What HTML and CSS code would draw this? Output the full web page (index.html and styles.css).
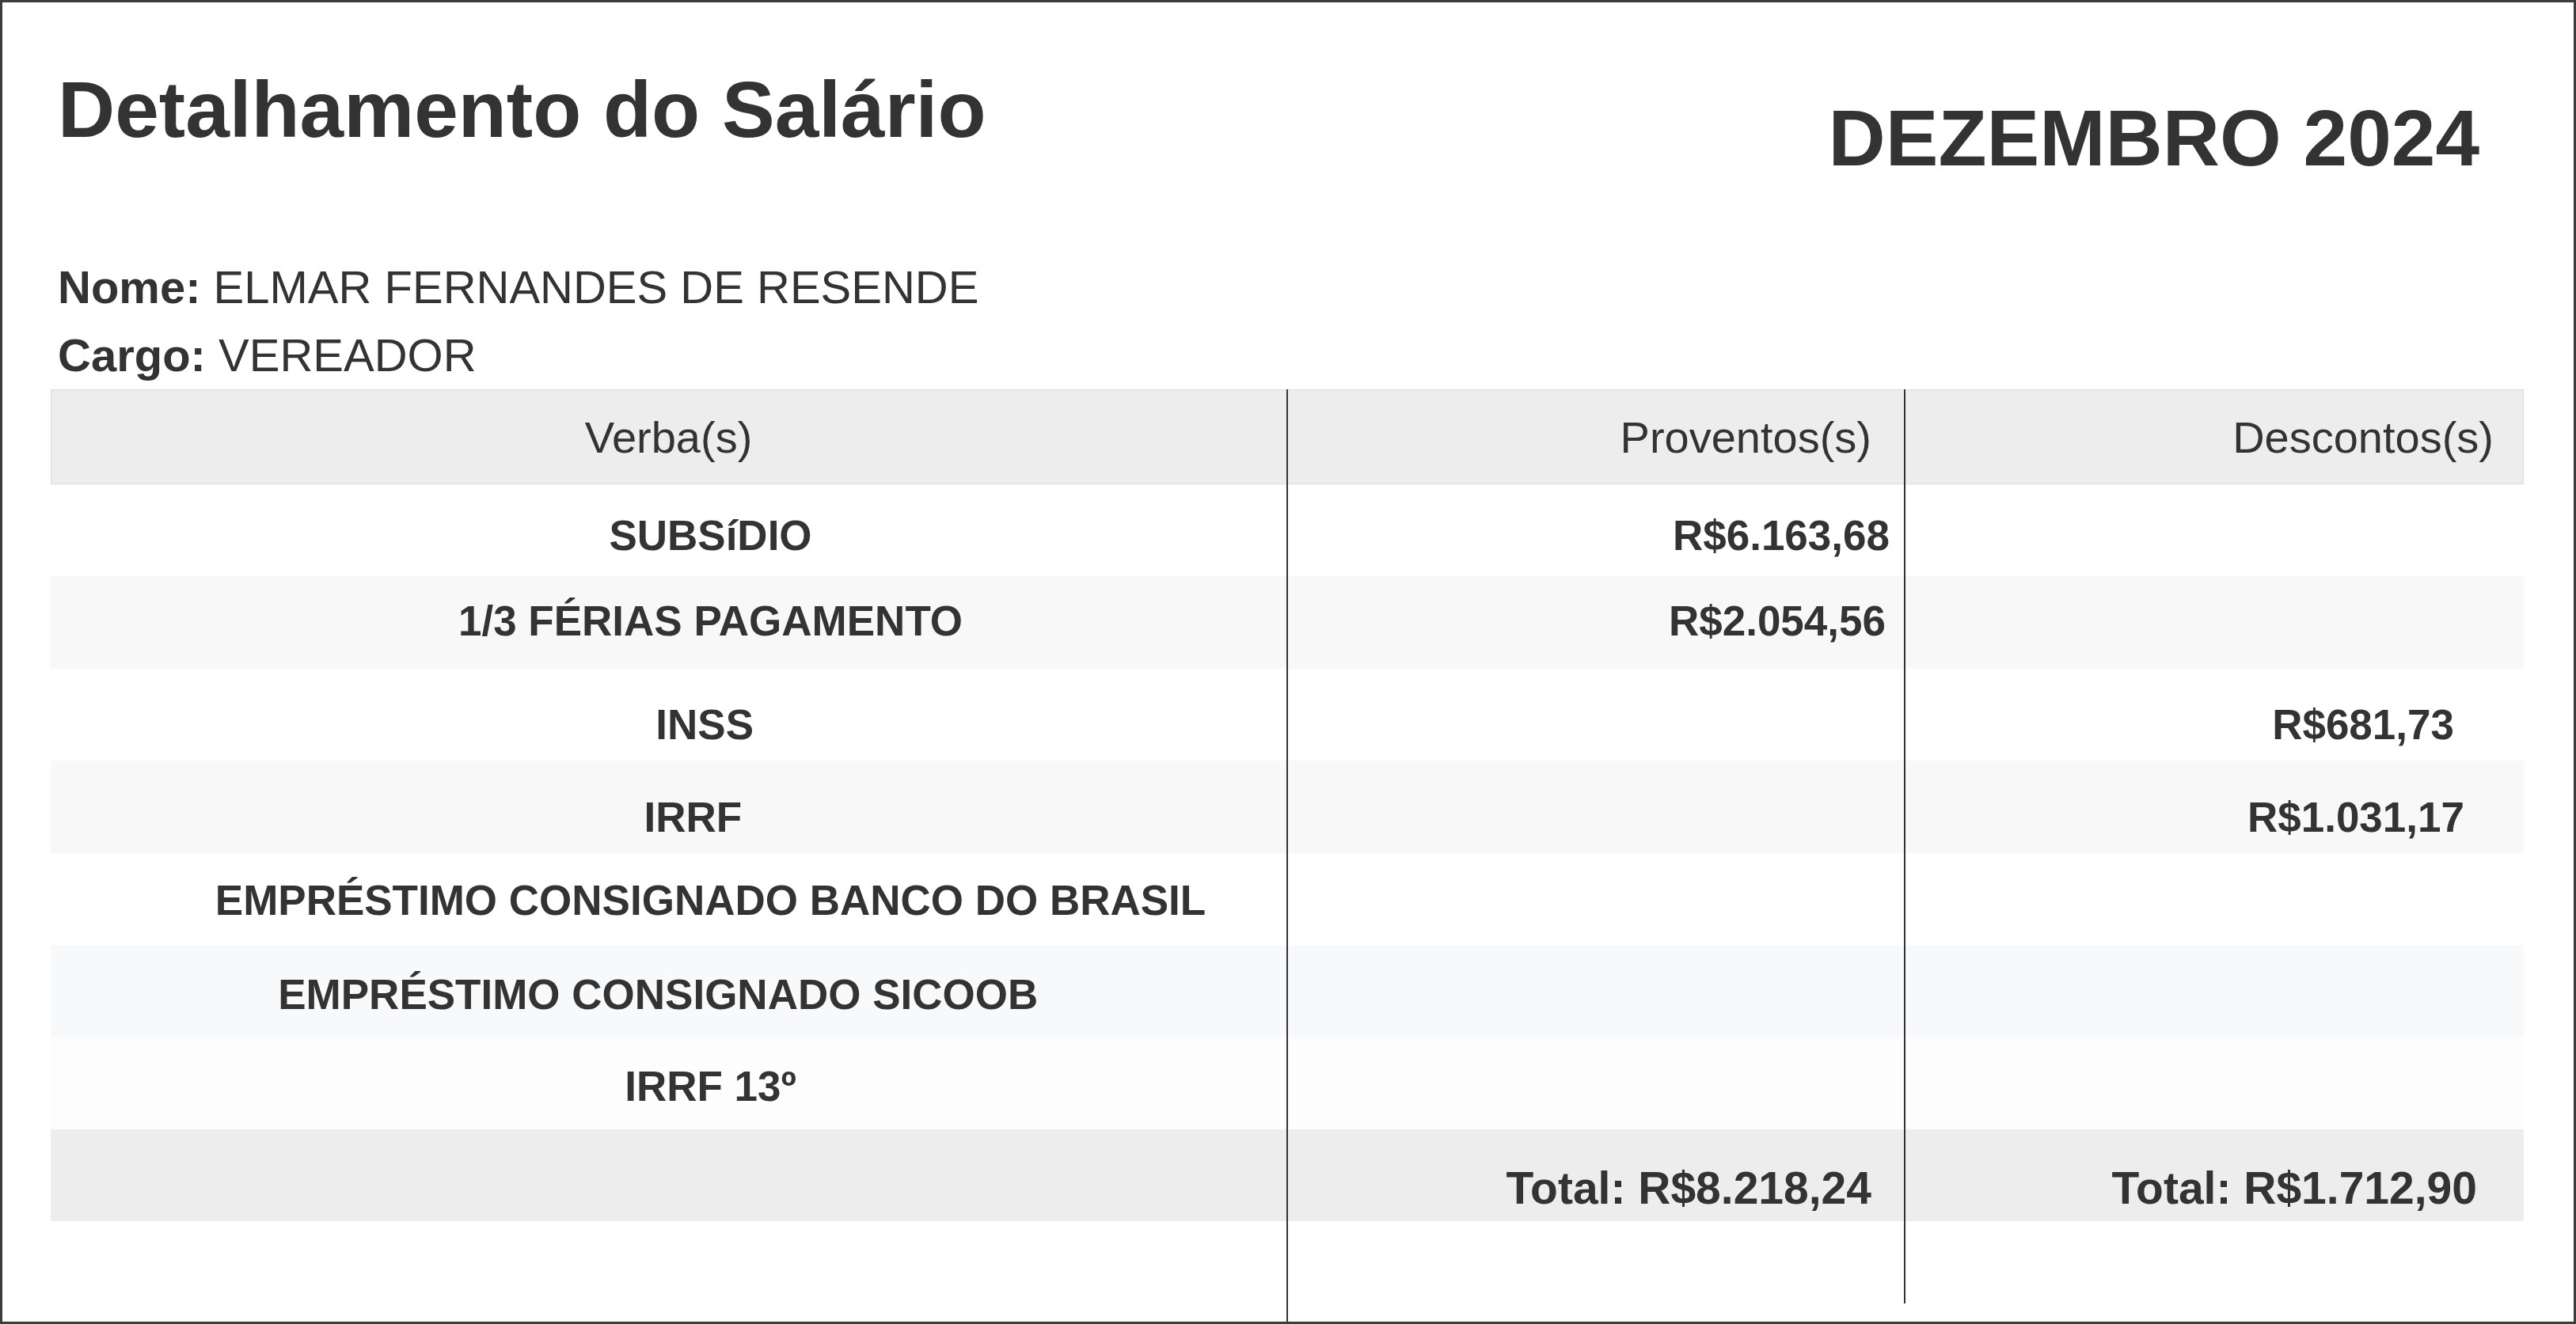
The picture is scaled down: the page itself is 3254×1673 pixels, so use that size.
FILE: index.html
```html
<!DOCTYPE html>
<html lang="pt-BR">
<head>
<meta charset="utf-8">
<title>Detalhamento do Salário</title>
<link rel="stylesheet" href="styles.css">
</head>
<body>
<div class="page">
  <header class="head">
    <h1 class="title">Detalhamento do Salário</h1>
    <div class="month">DEZEMBRO 2024</div>
  </header>
  <div class="info">
    <p class="info-line"><b>Nome:</b> ELMAR FERNANDES DE RESENDE</p>
    <p class="info-line"><b>Cargo:</b> VEREADOR</p>
  </div>
  <div class="table">
    <div class="row row--head">
      <div class="cell cell--th-verba">Verba(s)</div>
      <div class="cell cell--th-num cell--th-prov">Proventos(s)</div>
      <div class="cell cell--th-num cell--th-desc">Descontos(s)</div>
    </div>
    <div class="row row--white row--a">
      <div class="cell cell--verba">SUBSíDIO</div>
      <div class="cell cell--val pad-18">R$6.163,68</div>
      <div class="cell cell--val"></div>
    </div>
    <div class="row row--gray row--b">
      <div class="cell cell--verba">1/3 FÉRIAS PAGAMENTO</div>
      <div class="cell cell--val pad-23">R$2.054,56</div>
      <div class="cell cell--val"></div>
    </div>
    <div class="row row--white row--c">
      <div class="cell cell--verba">INSS&nbsp;</div>
      <div class="cell cell--val"></div>
      <div class="cell cell--val pad-88">R$681,73</div>
    </div>
    <div class="row row--gray row--c">
      <div class="cell cell--verba">IRRF&nbsp;&nbsp;&nbsp;</div>
      <div class="cell cell--val"></div>
      <div class="cell cell--val pad-75">R$1.031,17</div>
    </div>
    <div class="row row--white row--d">
      <div class="cell cell--verba">EMPRÉSTIMO CONSIGNADO BANCO DO BRASIL</div>
      <div class="cell cell--val"></div>
      <div class="cell cell--val"></div>
    </div>
    <div class="row row--blue row--e">
      <div class="cell cell--verba">EMPRÉSTIMO CONSIGNADO SICOOB&nbsp;&nbsp;&nbsp;&nbsp;&nbsp;&nbsp;&nbsp;&nbsp;&nbsp;</div>
      <div class="cell cell--val"></div>
      <div class="cell cell--val"></div>
    </div>
    <div class="row row--faint row--e">
      <div class="cell cell--verba">IRRF 13º</div>
      <div class="cell cell--val"></div>
      <div class="cell cell--val"></div>
    </div>
    <div class="row row--total">
      <div class="cell cell--verba"></div>
      <div class="cell cell--val pad-41">Total: R$8.218,24</div>
      <div class="cell cell--val pad-59">Total: R$1.712,90</div>
    </div>
    <div class="tail">
      <div class="tail-cell"></div>
      <div class="tail-cell tail-cell--long"></div>
      <div class="tail-cell tail-cell--short"></div>
    </div>
  </div>
</div>
</body>
</html>
```
FILE: styles.css
```css
html, body {
  margin: 0;
  padding: 0;
  background: #ffffff;
}

body {
  font-family: "Liberation Sans", Arial, sans-serif;
  color: #333333;
}

.page {
  width: 3254px;
  height: 1673px;
  box-sizing: border-box;
  border: 3px solid #3c3c3c;
  padding: 0 63px 0 61px;
  display: flex;
  flex-direction: column;
  overflow: hidden;
}

.head {
  display: flex;
  justify-content: space-between;
  align-items: flex-start;
  padding: 85px 56px 0 9px;
}

.title {
  margin: 0;
  font-size: 100px;
  line-height: 100px;
  font-weight: 700;
}

.month {
  margin-top: 36px;
  font-size: 100px;
  line-height: 100px;
  font-weight: 700;
}

.info {
  margin-top: 96px;
  padding-left: 9px;
}

.info-line {
  margin: 0;
  font-size: 58px;
  line-height: 86px;
}

.info-line b {
  font-weight: 700;
}

.table {
  display: flex;
  flex-direction: column;
  width: 3124px;
}

.row {
  display: grid;
  grid-template-columns: 1561px 780px 1fr;
  height: 116.375px;
  font-size: 53px;
  font-weight: 700;
}

.row--head {
  height: 120px;
  background: #ededed;
  box-shadow: inset 0 0 0 1px #dadada;
  font-size: 56px;
  font-weight: 400;
}

.row--white { background: #ffffff; }
.row--gray { background: #f8f8f8; }
.row--blue { background: #f8f9fa; }
.row--faint { background: #fdfdfd; }
.row--total {
  background: #ededed;
  font-size: 57px;
}

.cell {
  display: flex;
  align-items: center;
  white-space: nowrap;
}

.cell + .cell {
  border-left: 2px solid #333333;
}

.cell--th-verba {
  justify-content: center;
}

.cell--th-num {
  justify-content: flex-end;
}

.cell--th-prov { padding-right: 41px; }
.cell--th-desc { padding-right: 38px; }

.cell--verba {
  justify-content: center;
  padding-left: 106px;
}

.row--a .cell { padding-top: 12px; }
.row--b .cell { padding-bottom: 4px; }
.row--c .cell { padding-top: 26px; }
.row--d .cell { padding-top: 4px; }
.row--e .cell { padding-top: 8px; }
.row--total .cell { padding-top: 32px; }

.cell--val {
  justify-content: flex-end;
}

.pad-18 { padding-right: 18px; }
.pad-23 { padding-right: 23px; }
.pad-41 { padding-right: 41px; }
.pad-59 { padding-right: 59px; }
.pad-75 { padding-right: 75px; }
.pad-88 { padding-right: 88px; }

.tail {
  display: grid;
  grid-template-columns: 1561px 780px 1fr;
  align-items: start;
  height: 127px;
}

.tail-cell--long {
  height: 127px;
  border-left: 2px solid #333333;
}

.tail-cell--short {
  height: 104px;
  border-left: 2px solid #333333;
}
```
